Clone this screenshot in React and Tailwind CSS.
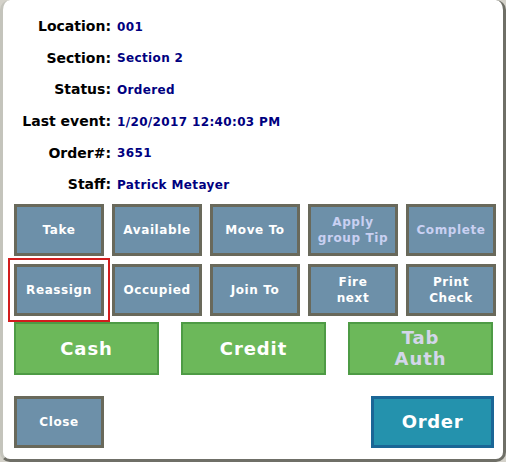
const info = [
  ['Location:', '001'],
  ['Section:', 'Section 2'],
  ['Status:', 'Ordered'],
  ['Last event:', '1/20/2017 12:40:03 PM'],
  ['Order#:', '3651'],
  ['Staff:', 'Patrick Metayer'],
];

function ActionButton({ children, disabled, selected }) {
  return (
    <button
      className={
        'h-[52px] w-[90px] bg-[#6d90a9] border-[3px] border-[#69695b] flex items-center justify-center text-center text-[12px] leading-[16px] font-bold tracking-[0.05em] ' +
        (disabled ? 'text-[#c9d0f2]' : 'text-white') +
        (selected ? ' outline-2 outline-offset-4 outline-[#d11d1d]' : '')
      }
    >
      {children}
    </button>
  );
}

function PayButton({ children, disabled }) {
  return (
    <button
      className={
        'h-[53px] w-[145px] bg-[#6cb85a] border-2 border-[#4e9b45] flex items-center justify-center text-center text-[18px] leading-[21px] font-bold tracking-[0.05em] ' +
        (disabled ? 'text-[#d3d6ea]' : 'text-white')
      }
    >
      {children}
    </button>
  );
}

export default function App() {
  return (
    <div className="w-[506px] h-[462px] bg-[#d4d2ca] font-['DejaVu_Sans',Verdana,sans-serif]">
      <div className="w-full h-full bg-white rounded-[10px] border-l-[3px] border-l-[#c4c4bc] border-r-[3px] border-r-[#6f6f67] border-b-[3px] border-b-[#6f6f67] pl-[11px] pt-[10px]">
        {/* Order details */}
        <div className="grid grid-cols-[97px_1fr] gap-x-[6px]">
          {info.map(([label, value]) => (
            <div key={label} className="contents">
              <div className="h-[31.6px] pt-[2px] flex items-center justify-end text-[14px] font-bold text-black">
                {label}
              </div>
              <div className="h-[31.6px] pt-[2px] flex items-center text-[12px] font-bold tracking-[0.03em] text-[#00007f]">
                {value}
              </div>
            </div>
          ))}
        </div>

        {/* Table actions */}
        <div className="grid grid-cols-[repeat(5,90px)] gap-x-[8px] gap-y-[8px] mt-[4px]">
          <ActionButton>Take</ActionButton>
          <ActionButton>Available</ActionButton>
          <ActionButton>Move To</ActionButton>
          <ActionButton disabled>Apply<br />group Tip</ActionButton>
          <ActionButton disabled>Complete</ActionButton>
          <ActionButton selected>Reassign</ActionButton>
          <ActionButton>Occupied</ActionButton>
          <ActionButton>Join To</ActionButton>
          <ActionButton>Fire<br />next</ActionButton>
          <ActionButton>Print<br />Check</ActionButton>
        </div>

        {/* Payment */}
        <div className="grid grid-cols-[145px_145px_145px] gap-x-[22px] mt-[6px]">
          <PayButton>Cash</PayButton>
          <PayButton>Credit</PayButton>
          <PayButton disabled>Tab<br />Auth</PayButton>
        </div>

        <div className="flex justify-between w-[480px] mt-[21px]">
          <button className="h-[52px] w-[90px] bg-[#6d90a9] border-[3px] border-[#69695b] text-white text-[12px] font-bold tracking-[0.05em]">
            Close
          </button>
          <button className="h-[52px] w-[123px] bg-[#2492ad] border-[3px] border-[#1a6696] text-white text-[18px] font-bold tracking-[0.04em]">
            Order
          </button>
        </div>
      </div>
    </div>
  );
}
